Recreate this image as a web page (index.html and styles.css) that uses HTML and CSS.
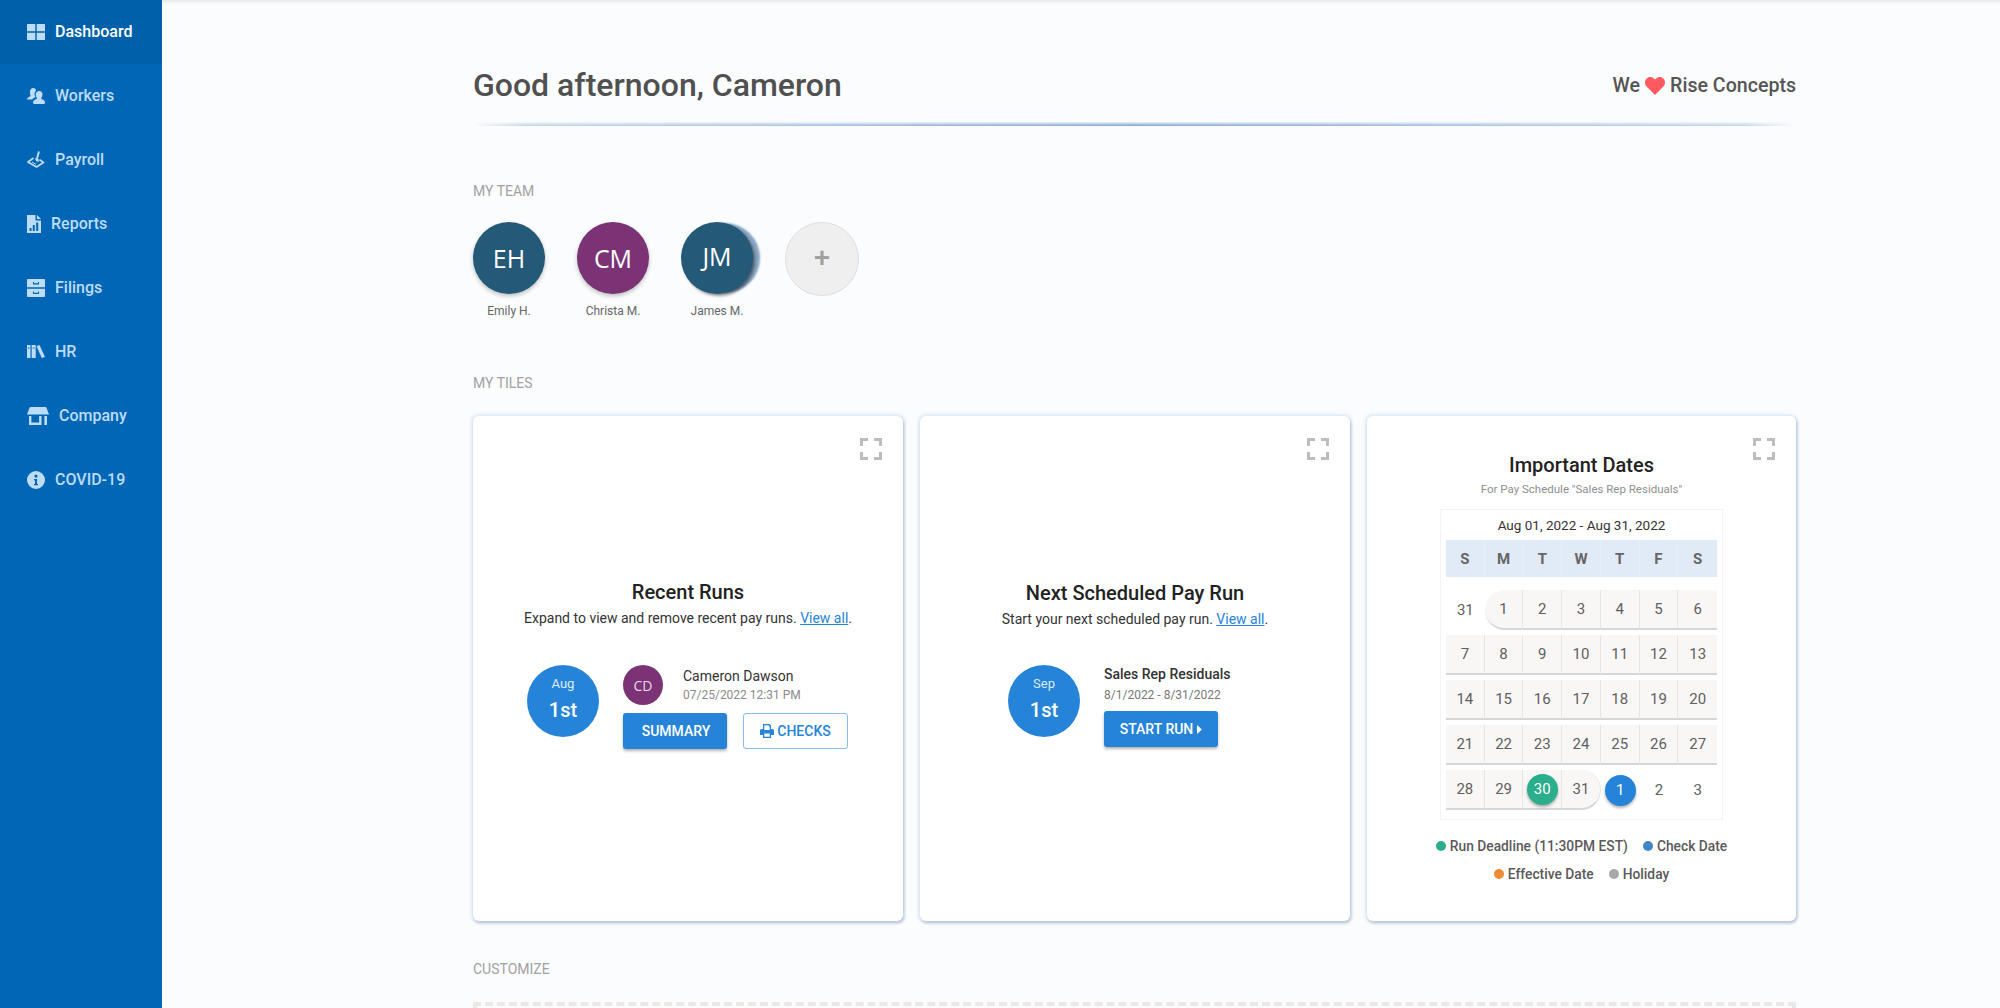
FILE: index.html
```html
<!DOCTYPE html>
<html lang="en">
<head>
<meta charset="utf-8">
<title>Dashboard</title>
<link rel="stylesheet" href="styles.css">
</head>
<body>
<div class="app">
  <nav class="sidebar">
    <a class="nav-item active"><svg class="ico" width="18" height="16" viewBox="0 0 18 16"><path d="M0 0h8.300v7.300H0zM9.700 0H18v7.300H9.700zM0 8.700h8.300V16H0zM9.700 8.700H18V16H9.700z"/></svg><span>Dashboard</span></a>
    <a class="nav-item"><svg class="ico" width="18" height="16" viewBox="0 0 18 16"><path d="M6.200 0C8 0 9 1.300 9 3 8 3.600 7.400 5 7.500 6.500c.1 1 .6 2 1.100 2.500-1.300.4-2.600 1.300-3.300 2.600H0c0-1.700 1.500-2.900 3.800-3.700C3 7 2.800 5.500 3 3.500 3.200 1.200 4.500 0 6.200 0z"/><path d="M12.300 3c2 0 3.200 1.400 3.200 3.400 0 1.500-.5 2.800-1.300 3.500 0 .7.300 1 1 1.300 1.500.6 2.800 1.300 2.800 3.400 0 .7-.3 1.400-.8 1.400H7c-.5 0-1-.7-1-1.400 0-2 1.400-2.800 3-3.400.7-.3 1-.6 1-1.300-.8-.7-1.300-2-1.300-3.500C8.700 4.400 10.300 3 12.300 3z"/></svg><span>Workers</span></a>
    <a class="nav-item"><svg class="ico" width="18" height="17" viewBox="0 0 18 17"><path class="ico-line" d="M6.500 7L1 11l8.500 5 7-4.500-4-2.800"/><path class="ico-stem" d="M12 .5L9.800 8"/><path d="M8 7.200l3.600.9.300 2.700-2.800-.5z"/><path class="ico-thin" d="M5 11l4 2.400"/></svg><span>Payroll</span></a>
    <a class="nav-item"><svg class="ico" width="14" height="18" viewBox="0 0 14 18"><path fill-rule="evenodd" d="M0 0h8.500v5.500H14V18H0zM2.500 13v3h2v-3zM5.800 10v6h2v-6zM9.200 7.500V16h2V7.500z"/><path d="M10 0l4 4h-4z"/></svg><span>Reports</span></a>
    <a class="nav-item"><svg class="ico" width="18" height="18" viewBox="0 0 18 18"><path fill-rule="evenodd" d="M1 0h16a1 1 0 0 1 1 1v7.300H0V1a1 1 0 0 1 1-1zM6 3v2.500h6V3h-1v1.200H7V3zM0 9.700h18V17a1 1 0 0 1-1 1H1a1 1 0 0 1-1-1zM6 12.500V15h6v-2.500h-1v1.200H7v-1.200z"/></svg><span>Filings</span></a>
    <a class="nav-item"><svg class="ico" width="18" height="13" viewBox="0 0 18 13"><path fill-rule="evenodd" d="M0 0h3.500v13H0zM1 2.500v1h1.500v-1zM4.700 0h4v13h-4zM5.800 2.500v1h1.800v-1zM9.500 1.200L12.500 0 18 12l-3.200 1z"/></svg><span>HR</span></a>
    <a class="nav-item"><svg class="ico" width="22" height="18" viewBox="0 0 22 18"><path d="M4 0h14c.8 0 1.200.3 1.600 1L22 7.500H0l2.400-6.500C2.800.3 3.200 0 4 0z"/><path d="M2 9h2.400v6.500h7.700V9h2.400v9H2z"/><path d="M17.400 9h2.600v9h-2.600z"/></svg><span>Company</span></a>
    <a class="nav-item"><svg class="ico" width="18" height="18" viewBox="0 0 18 18"><path fill-rule="evenodd" d="M9 0a9 9 0 1 1 0 18A9 9 0 0 1 9 0zM9 3.500a1.600 1.600 0 1 0 0 3.200 1.600 1.600 0 0 0 0-3.200zM7 8v1.400h1v3.500H7v1.400h4v-1.400h-1V8z"/></svg><span>COVID-19</span></a>
  </nav>
  <main class="main">
    <header class="top">
      <h1 class="greeting">Good afternoon, Cameron</h1>
      <div class="love">We <svg class="heart" width="20" height="18" viewBox="0 0 20 18"><path d="M10 18L1.600 9.500C-.5 7.300-.5 3.700 1.500 1.700 3.500-.4 6.700-.5 8.800 1.400L10 2.600l1.200-1.200c2.100-1.900 5.300-1.800 7.300.3 2 2 2 5.600-.1 7.800z"/></svg> Rise Concepts</div>
    </header>
    <div class="rule"></div>

    <h2 class="section team-label">MY TEAM</h2>
    <div class="team">
      <div class="member"><div class="avatar teal">EH</div><div class="member-name">Emily H.</div></div>
      <div class="member"><div class="avatar plum">CM</div><div class="member-name">Christa M.</div></div>
      <div class="member"><div class="avatar teal ring"><span class="raise">JM</span></div><div class="member-name">James M.</div></div>
      <div class="member add-member"><div class="avatar add">+</div></div>
    </div>

    <h2 class="section tiles-label">MY TILES</h2>
    <div class="tiles">
      <section class="tile tile-run">
        <svg class="expand" width="22" height="22" viewBox="0 0 22 22"><path d="M1.500 8V1.500H8M14 1.500h6.500V8M20.500 14v6.500H14M8 20.500H1.500V14"/></svg>
        <h3 class="tile-title">Recent Runs</h3>
        <p class="tile-text">Expand to view and remove recent pay runs. <a class="link">View all</a>.</p>
        <div class="run-row run-recent">
          <div class="date-badge"><span class="month">Aug</span><span class="day">1st</span></div>
          <div class="run-info">
            <div class="who">
              <div class="mini-avatar">CD</div>
              <div class="who-text"><div class="run-name">Cameron Dawson</div><div class="run-sub">07/25/2022 12:31 PM</div></div>
            </div>
            <div class="btns">
              <a class="btn primary w-summary">SUMMARY</a>
              <a class="btn outline"><svg class="print" width="14" height="14" viewBox="0 0 14 14"><path fill-rule="evenodd" d="M3 0h6.500L11 1.500V5h1.200C13.200 5 14 5.800 14 6.800V11h-3v3H3v-3H0V6.800C0 5.800.8 5 1.800 5H3zM4.300 1.300V6h5.400V2.300H8.700v-1zM4.300 9.500v3.200h5.400V9.500z"/></svg>CHECKS</a>
            </div>
          </div>
        </div>
      </section>

      <section class="tile tile-run tile-next">
        <svg class="expand" width="22" height="22" viewBox="0 0 22 22"><path d="M1.500 8V1.500H8M14 1.500h6.500V8M20.500 14v6.500H14M8 20.500H1.500V14"/></svg>
        <h3 class="tile-title">Next Scheduled Pay Run</h3>
        <p class="tile-text">Start your next scheduled pay run. <a class="link">View all</a>.</p>
        <div class="run-row run-next">
          <div class="date-badge"><span class="month">Sep</span><span class="day">1st</span></div>
          <div class="run-info">
            <div class="run-name strong">Sales Rep Residuals</div>
            <div class="run-sub gap-sub">8/1/2022 - 8/31/2022</div>
            <div class="btns"><a class="btn primary w-start">START RUN<svg class="caret" width="5" height="9" viewBox="0 0 5 9"><path d="M0 0l5 4.500L0 9z"/></svg></a></div>
          </div>
        </div>
      </section>

      <section class="tile tile-cal">
        <svg class="expand" width="22" height="22" viewBox="0 0 22 22"><path d="M1.500 8V1.500H8M14 1.500h6.500V8M20.500 14v6.500H14M8 20.500H1.500V14"/></svg>
        <h3 class="tile-title">Important Dates</h3>
        <p class="cal-sub">For Pay Schedule "Sales Rep Residuals"</p>
        <div class="calendar">
          <div class="cal-range">Aug 01, 2022 - Aug 31, 2022</div>
          <div class="cal-head"><span>S</span><span>M</span><span>T</span><span>W</span><span>T</span><span>F</span><span>S</span></div>
          <div class="cal-week"><span class="off">31</span><span class="start">1</span><span>2</span><span>3</span><span>4</span><span>5</span><span>6</span></div>
          <div class="cal-week"><span>7</span><span>8</span><span>9</span><span>10</span><span>11</span><span>12</span><span>13</span></div>
          <div class="cal-week"><span>14</span><span>15</span><span>16</span><span>17</span><span>18</span><span>19</span><span>20</span></div>
          <div class="cal-week"><span>21</span><span>22</span><span>23</span><span>24</span><span>25</span><span>26</span><span>27</span></div>
          <div class="cal-week"><span>28</span><span>29</span><span><b class="pin green">30</b></span><span class="end">31</span><span class="off"><b class="pin blue">1</b></span><span class="off">2</span><span class="off">3</span></div>
        </div>
        <div class="legend">
          <div class="legend-row"><span class="key"><i class="dot d-green"></i>Run Deadline (11:30PM EST)</span><span class="key"><i class="dot d-blue"></i>Check Date</span></div>
          <div class="legend-row"><span class="key"><i class="dot d-orange"></i>Effective Date</span><span class="key"><i class="dot d-grey"></i>Holiday</span></div>
        </div>
      </section>
    </div>

    <h2 class="section custom-label">CUSTOMIZE</h2>
    <div class="dropzone"></div>
  </main>
</div>
</body>
</html>
```
FILE: styles.css
```css
* { box-sizing: border-box; }
html, body { margin: 0; height: 100%; overflow: hidden; }
body { font-family: Roboto, "Liberation Sans", sans-serif; background: #fbfcfe; color: #222; }
.app { display: flex; height: 1008px; overflow: hidden; }

.sidebar { width: 162px; flex: none; background: #0066b5; position: relative; z-index: 2; }
.nav-item { display: flex; align-items: center; gap: 10px; height: 64px; padding: 0 0 1px 27px; color: #bcdcf7; font-size: 16px; font-weight: 500; }
.nav-item.active { background: #0060aa; color: #fff; }
.nav-item .ico { flex: none; fill: #bcdcf7; }
.ico-line { fill: none; stroke: #bcdcf7; stroke-width: 1.7; stroke-linejoin: round; }
.ico-stem { fill: none; stroke: #bcdcf7; stroke-width: 2; }
.ico-thin { fill: none; stroke: #bcdcf7; stroke-width: 1; }

.main { flex: 1; min-width: 0; padding: 0 204px 0 311px; box-shadow: inset 0 4px 4px -3px rgba(0,0,0,.12); }
.top { display: flex; justify-content: space-between; align-items: center; height: 122px; padding-top: 49px; }
.greeting { margin: 0; font-size: 32px; font-weight: 500; color: #505050; line-height: 73px; }
.love { display: flex; align-items: center; gap: 5px; font-size: 19.6px; font-weight: 500; color: #555; line-height: 73px; }
.heart { fill: #ff5a5f; }
.rule { height: 4px; background: linear-gradient(90deg, rgba(120,160,205,0), rgba(122,162,207,.45) 4%, #7aa2cf 50%, rgba(122,162,207,.45) 96%, rgba(120,160,205,0)); -webkit-mask-image: linear-gradient(0deg, #000, rgba(0,0,0,.1)); mask-image: linear-gradient(0deg, #000, rgba(0,0,0,.1)); }

.section { margin: 0; font-size: 14px; font-weight: 400; color: #a2a2a2; line-height: 16px; }
.team-label { margin-top: 57px; }
.team { display: flex; gap: 32px; margin-top: 23px; }
.member { width: 72px; display: flex; flex-direction: column; align-items: center; }
.avatar { width: 72px; height: 72px; border-radius: 50%; display: flex; align-items: center; justify-content: center; color: #fff; font-family: "Open Sans", sans-serif; font-size: 25px; box-shadow: 0 2px 4px rgba(0,0,0,.25); }
.teal { background: #245978; }
.plum { background: #7b3375; }
.ring { box-shadow: 2px 2px 3px rgba(0,0,0,.45), 8px 0 2px -1px rgba(85,130,170,.7); }
.raise { margin-top: -5px; }
.member-name { margin-top: 9px; font-size: 12px; line-height: 16px; color: #666; white-space: nowrap; }
.add { width: 74px; height: 74px; padding-bottom: 2px; background: #efefef; border: 1px solid #dedede; box-shadow: none; color: #a0a0a0; font-family: "Liberation Sans", sans-serif; font-weight: 700; font-size: 28px; }
.add-member { width: 74px; }

.tiles-label { margin-top: 56px; }
.tiles { display: grid; grid-template-columns: 430px 430px 1fr; gap: 17px; margin-top: 25px; }
.tile { position: relative; height: 505px; background: #fff; border-radius: 6px; text-align: center; box-shadow: 0 0 3px 2px rgba(190,215,240,.45), 1px 2px 3px rgba(70,90,120,.4); }
.tile-run { padding-top: 163px; }
.tile-next { padding-top: 164px; }
.tile-cal { padding-top: 36px; }
.expand { position: absolute; top: 22px; right: 21px; fill: none; stroke: #bdbdbd; stroke-width: 3; }
.tile-title { margin: 0; font-size: 20px; font-weight: 500; line-height: 26px; color: #222; }
.tile-text { margin: 3px 0 0; font-size: 14px; line-height: 20px; color: #333; }
.link { color: #2584d8; text-decoration: underline; }

.run-row { display: flex; margin-top: 37px; text-align: left; }
.run-recent { padding-left: 54px; gap: 24px; }
.run-next { padding-left: 88px; gap: 24px; margin-top: 36px; }
.date-badge { width: 72px; height: 72px; flex: none; padding-bottom: 3px; border-radius: 50%; background: #2584d8; color: #fff; display: flex; flex-direction: column; align-items: center; justify-content: center; }
.month { font-size: 13px; line-height: 18px; color: #dcecfa; }
.day { font-size: 20px; font-weight: 500; line-height: 28px; margin-top: 3px; }
.who { display: flex; gap: 20px; height: 40px; margin-bottom: 8px; }
.mini-avatar { width: 40px; height: 40px; border-radius: 50%; background: #7b3375; color: #e8d8e8; font-family: "Open Sans", sans-serif; font-size: 14px; display: flex; align-items: center; justify-content: center; }
.run-name { font-size: 14px; line-height: 18px; color: #333; margin-top: 2px; }
.run-name.strong { font-weight: 500; margin-top: 0; }
.run-sub { font-size: 12px; line-height: 18px; color: #8a8a8a; }
.gap-sub { margin-top: 3px; margin-bottom: 7px; color: #777; }
.who-text .run-sub { margin-top: 1px; }
.btns { display: flex; gap: 16px; }
.btn { height: 36px; display: inline-flex; align-items: center; justify-content: center; font-size: 14px; font-weight: 500; border-radius: 3px; }
.primary { background: #2584d8; color: #fff; box-shadow: 0 2px 3px rgba(0,0,0,.3); }
.w-summary { width: 104px; padding-left: 2px; }
.w-start { width: 114px; }
.caret { fill: #fff; margin-left: 4px; }
.outline { width: 105px; background: #fff; color: #2584d8; border: 1px solid #86bdea; }
.print { fill: #2584d8; margin-right: 3px; }

.cal-sub { margin: 3px 0 0; font-size: 11.5px; line-height: 16px; color: #8f8f8f; }
.calendar { width: 283px; height: 311px; margin: 12px auto 0; padding: 0 5px; border: 1px solid #f3f3f3; background: #fff; }
.cal-range { font-size: 13.5px; line-height: 30px; color: #333; }
.cal-head { display: grid; grid-template-columns: repeat(7, 1fr); height: 37px; background: #e1eaf7; color: #666; font-size: 15px; font-weight: 700; }
.cal-head span { display: flex; align-items: center; justify-content: center; border-right: 1px solid #e9effa; }
.cal-head span:last-child { border-right: 0; }
.cal-week { display: grid; grid-template-columns: repeat(7, 1fr); height: 40px; margin-bottom: 5px; font-size: 15px; color: #5f5f5f; }
.cal-head + .cal-week { margin-top: 13px; }
.cal-week span { display: flex; align-items: center; justify-content: center; background: #f9f7f6; border-right: 1px solid #e7e5e4; border-bottom: 2px solid #d6d6d6; }
.cal-week span:last-child { border-right: 0; }
.cal-week .off { background: none; border: 0; }
.cal-week .start { border-radius: 20px 0 0 20px; }
.cal-week .end { border-radius: 0 20px 20px 0; border-right: 1px solid #e4e4e4; }
.pin { width: 31px; height: 31px; border-radius: 50%; display: flex; align-items: center; justify-content: center; color: #fff; font-weight: 400; box-shadow: 0 2px 3px rgba(0,0,0,.3); }
.green { background: #2bae8c; }
.blue { background: #2584d8; }

.legend { margin-top: 12px; }
.legend-row { display: flex; justify-content: center; gap: 15px; height: 28px; align-items: center; }
.key { display: inline-flex; align-items: center; font-size: 13.8px; font-weight: 500; color: #5a5a5a; }
.dot { width: 10px; height: 10px; border-radius: 50%; margin-right: 4px; }
.d-green { background: #2bae8c; }
.d-blue { background: #4386c8; }
.d-orange { background: #ee8b34; }
.d-grey { background: #a8a8a8; }

.custom-label { margin-top: 40px; }
.dropzone { height: 120px; margin-top: 25px; border: 4px dashed #ede8e6; }
```
